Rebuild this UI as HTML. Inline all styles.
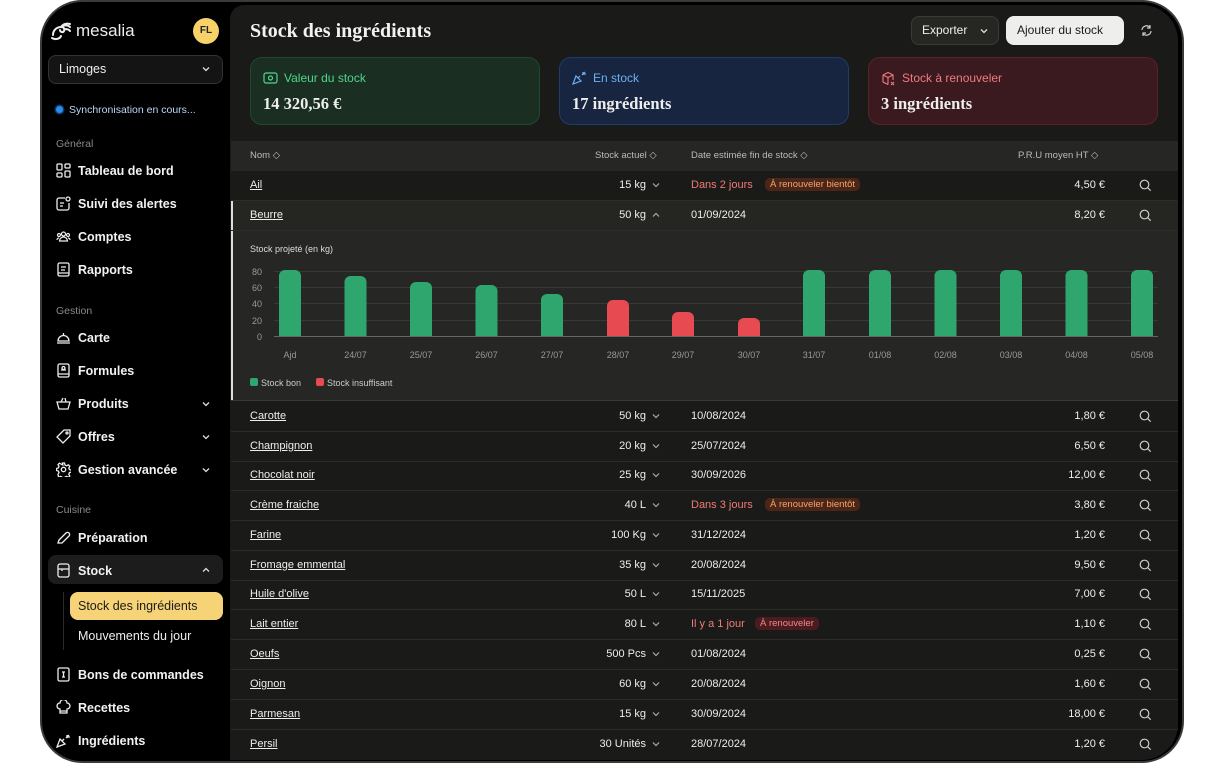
<!DOCTYPE html>
<html><head><meta charset="utf-8"><style>
*{box-sizing:border-box;margin:0;padding:0}
body{width:1224px;height:763px;background:#fff;position:relative;overflow:hidden;font-family:"Liberation Sans",sans-serif;color:#eee}
.abs{position:absolute}
.frame{left:40px;top:0;width:1144px;height:763px;background:#000;border-radius:42px;border:2px solid #3a3a3a}
.main{left:230px;top:5px;width:948px;height:755px;background:#1a1a18;border-radius:14px 36px 36px 0;overflow:hidden}
.nav{position:absolute;left:78px;font-size:12.5px;font-weight:bold;color:#f2f2f2}
.ico{position:absolute;left:56px;width:15px;height:15px}
.sec{position:absolute;left:56px;font-size:10.5px;color:#8a8a8a}
.chev{position:absolute;left:201px;width:10px;height:10px}
.t{position:absolute;font-size:11px;color:#eee;white-space:nowrap}
.name{left:250px;text-decoration:underline}
.red{color:#f07a7a}
.badge{position:absolute;font-size:9.5px;padding:1px 5px;border-radius:5px;background:#4a2518;color:#f3a86a}
.badge2{background:#4a1c20;color:#f08a8a}
.sep{position:absolute;left:231px;width:947px;height:1px;background:#2c2c29}
.card{position:absolute;top:57px;width:290px;height:68px;border-radius:12px}
.card .l{position:absolute;left:33px;top:13px;font-size:12px}
.card .v{position:absolute;left:12px;top:36px;font-family:"Liberation Serif",serif;font-weight:bold;font-size:16.5px;color:#eee}
</style></head><body>
<div class="abs frame"></div>
<svg class="abs" style="left:50px;top:21px" width="24" height="20" viewBox="0 0 24 20"><path d="M3 14c0-5 4-8 8-8 3 0 4 2 3 4s-4 1-4-1M2 17c3 2 8 1 9-2M11 6c2-3 6-4 9-3M13 5c2-1 5-1 7 1M14 8c2 0 5 0 6 2" stroke="#eee" stroke-width="2" fill="none" stroke-linecap="round"/></svg>
<div class="abs" style="left:76px;top:21px;font-size:17px;color:#eee">mesalia</div>
<div class="abs" style="left:193px;top:18px;width:26px;height:26px;border-radius:50%;background:#f6d268;color:#222;font-size:10px;font-weight:bold;text-align:center;line-height:26px">FL</div>
<div class="abs" style="left:48px;top:55px;width:175px;height:29px;border:1px solid #333;border-radius:8px;background:#141414"></div>
<div class="abs" style="left:59px;top:62px;font-size:12.5px">Limoges</div>
<svg class="abs" style="left:201px;top:64px" width="10" height="10"><path d="M2 3.5l3 3 3-3" stroke="#ddd" fill="none" stroke-width="1.3"/></svg>
<div class="abs" style="left:56px;top:106px;width:7px;height:7px;border-radius:50%;background:#2a8cf0;box-shadow:0 0 0 1.5px #0d3d6e"></div>
<div class="abs" style="left:69px;top:104px;font-size:10.5px;color:#b9d7f5">Synchronisation en cours...</div>
<div class="sec" style="top:138px">Général</div>
<svg class="ico" style="top:163px" viewBox="0 0 15 15"><g stroke="#eee" fill="none" stroke-width="1.3"><rect x="1" y="1" width="5" height="6" rx="1"/><rect x="9" y="1" width="5" height="4" rx="1"/><rect x="1" y="10" width="5" height="4" rx="1"/><rect x="9" y="8" width="5" height="6" rx="1"/></g></svg>
<div class="nav" style="top:164px">Tableau de bord</div>
<svg class="ico" style="top:196px" viewBox="0 0 15 15"><g stroke="#eee" fill="none" stroke-width="1.3"><path d="M9 2H3a2 2 0 0 0-2 2v8a2 2 0 0 0 2 2h8a2 2 0 0 0 2-2V7"/><circle cx="12" cy="3" r="2"/><path d="M4 7h4M4 10h3"/></g></svg>
<div class="nav" style="top:197px">Suivi des alertes</div>
<svg class="ico" style="top:229px" viewBox="0 0 15 15"><g stroke="#eee" fill="none" stroke-width="1.2"><circle cx="7.5" cy="5" r="2"/><circle cx="3" cy="6" r="1.5"/><circle cx="12" cy="6" r="1.5"/><path d="M3.5 12a4 4 0 0 1 8 0zM1 11a2 2 0 0 1 2-2M14 11a2 2 0 0 0-2-2"/></g></svg>
<div class="nav" style="top:230px">Comptes</div>
<svg class="ico" style="top:262px" viewBox="0 0 15 15"><g stroke="#eee" fill="none" stroke-width="1.3"><rect x="2" y="1" width="11" height="13" rx="1.5"/><path d="M5 5h5M5 8h4M2 11h11"/></g></svg>
<div class="nav" style="top:263px">Rapports</div>
<div class="sec" style="top:305px">Gestion</div>
<svg class="ico" style="top:330px" viewBox="0 0 15 15"><g stroke="#eee" fill="none" stroke-width="1.3"><path d="M2 11a5.5 5.5 0 0 1 11 0zM1 13h13M7.5 3v2"/></g></svg>
<div class="nav" style="top:331px">Carte</div>
<svg class="ico" style="top:363px" viewBox="0 0 15 15"><g stroke="#eee" fill="none" stroke-width="1.3"><rect x="2" y="1" width="11" height="13" rx="1.5"/><path d="M5 7h5M2 11h11"/><circle cx="7.5" cy="5" r="1.5"/></g></svg>
<div class="nav" style="top:364px">Formules</div>
<svg class="ico" style="top:396px" viewBox="0 0 15 15"><g stroke="#eee" fill="none" stroke-width="1.3"><path d="M1 6h13l-2 7H3zM5 6l2-4M10 6l-1-4"/></g></svg>
<div class="nav" style="top:397px">Produits</div>
<svg class="chev" style="top:399px"><path d="M2 3.5l3 3 3-3" stroke="#ddd" fill="none" stroke-width="1.3"/></svg>
<svg class="ico" style="top:429px" viewBox="0 0 15 15"><g stroke="#eee" fill="none" stroke-width="1.3"><path d="M8 1h6v6l-7 7-6-6z"/><circle cx="11" cy="4" r="1"/></g></svg>
<div class="nav" style="top:430px">Offres</div>
<svg class="chev" style="top:432px"><path d="M2 3.5l3 3 3-3" stroke="#ddd" fill="none" stroke-width="1.3"/></svg>
<svg class="ico" style="top:462px" viewBox="0 0 15 15"><g stroke="#eee" fill="none" stroke-width="1.3"><circle cx="7.5" cy="7.5" r="2.2"/><path d="M6.5 1h2l.5 2 1.6.8 1.8-1 1.4 1.4-1 1.8.7 1.6 2 .5v2l-2 .5-.7 1.6 1 1.8-1.4 1.4-1.8-1-1.6.7-.5 2h-2l-.5-2-1.6-.7-1.8 1L2 12.3l1-1.8L2.3 9 .5 8.5v-2L2.3 6l.7-1.6-1-1.8L3.4 1.2l1.8 1L6.8 3z"/></g></svg>
<div class="nav" style="top:463px">Gestion avancée</div>
<svg class="chev" style="top:465px"><path d="M2 3.5l3 3 3-3" stroke="#ddd" fill="none" stroke-width="1.3"/></svg>
<div class="sec" style="top:504px">Cuisine</div>
<svg class="ico" style="top:530px" viewBox="0 0 15 15"><g stroke="#eee" fill="none" stroke-width="1.3"><path d="M2 13l1-3 7-7a2 2 0 0 1 3 3l-7 7z"/></g></svg>
<div class="nav" style="top:531px">Préparation</div>
<div class="abs" style="left:48px;top:555px;width:175px;height:29px;border-radius:8px;background:#1c1c1c"></div>
<svg class="ico" style="top:563px" viewBox="0 0 15 15"><g stroke="#eee" fill="none" stroke-width="1.3"><rect x="2" y="1" width="11" height="13" rx="2"/><path d="M2 6h11M6 6v2"/></g></svg>
<div class="nav" style="top:564px">Stock</div>
<svg class="chev" style="top:565px"><path d="M2 6.5l3-3 3 3" stroke="#ddd" fill="none" stroke-width="1.3"/></svg>
<div class="abs" style="left:63px;top:592px;width:1px;height:58px;background:#2a2a2a"></div>
<div class="abs" style="left:70px;top:592px;width:153px;height:28px;border-radius:8px;background:#f6d377"></div>
<div class="abs" style="left:78px;top:599px;font-size:12.5px;color:#1a1a1a">Stock des ingrédients</div>
<div class="abs" style="left:78px;top:629px;font-size:12.5px;color:#eee">Mouvements du jour</div>
<svg class="ico" style="top:667px" viewBox="0 0 15 15"><g stroke="#eee" fill="none" stroke-width="1.3"><rect x="2" y="1" width="11" height="13" rx="1.5"/><path d="M6 5h3M7.5 5v5M6 10h3"/></g></svg>
<div class="nav" style="top:668px">Bons de commandes</div>
<svg class="ico" style="top:700px" viewBox="0 0 15 15"><g stroke="#eee" fill="none" stroke-width="1.3"><path d="M4 9a3 3 0 0 1 0-6 3.5 3.5 0 0 1 7 0 3 3 0 0 1 0 6v4H4zM4 11h7"/></g></svg>
<div class="nav" style="top:701px">Recettes</div>
<svg class="ico" style="top:733px" viewBox="0 0 15 15"><g stroke="#eee" fill="none" stroke-width="1.3"><path d="M1 14l3-8 5 5zM6 8l2-2M10 5l3-3M11 2v3M14 4h-3"/></g></svg>
<div class="nav" style="top:734px">Ingrédients</div>

<div class="abs main"></div>
<div class="abs" style="left:250px;top:20px;font-family:'Liberation Serif',serif;font-weight:bold;font-size:20px;color:#f2f2f2">Stock des ingrédients</div>
<div class="abs" style="left:911px;top:16px;width:88px;height:29px;border:1px solid #3a3a36;border-radius:8px;background:#262623"></div>
<div class="abs" style="left:922px;top:23px;font-size:12px">Exporter</div>
<svg class="abs" style="left:979px;top:26px" width="10" height="10"><path d="M2 3.5l3 3 3-3" stroke="#ddd" fill="none" stroke-width="1.3"/></svg>
<div class="abs" style="left:1006px;top:16px;width:118px;height:29px;border-radius:8px;background:#eeeeec"></div>
<div class="abs" style="left:1017px;top:23px;font-size:12px;color:#1a1a1a">Ajouter du stock</div>
<svg class="abs" style="left:1140px;top:24px" width="13" height="13" viewBox="0 0 13 13"><path d="M2 6a4.5 4.5 0 0 1 8-2.5M11 7a4.5 4.5 0 0 1-8 2.5M10 1v3H7M3 12V9h3" stroke="#ccc" fill="none" stroke-width="1.2"/></svg>

<div class="card" style="left:250px;background:#1a2e22;border:1px solid #1f4a30"><svg class="abs" style="left:12px;top:14px" width="15" height="12"><rect x="1" y="1" width="13" height="10" rx="2" stroke="#4fd68a" fill="none" stroke-width="1.2"/><circle cx="7.5" cy="6" r="2" stroke="#4fd68a" fill="none" stroke-width="1.2"/></svg><div class="l" style="color:#4fd68a">Valeur du stock</div><div class="v">14 320,56 €</div></div>
<div class="card" style="left:559px;background:#172540;border:1px solid #1f3d6a"><svg class="abs" style="left:12px;top:13px" width="15" height="14"><path d="M1 13l3-8 5 5zM6 7l2-2M10 4l3-3M11 1v3M14 3h-3" stroke="#6bb0f0" fill="none" stroke-width="1.2"/></svg><div class="l" style="color:#6bb0f0">En stock</div><div class="v">17 ingrédients</div></div>
<div class="card" style="left:868px;background:#3a1a1e;border:1px solid #5a2228"><svg class="abs" style="left:12px;top:13px" width="15" height="15"><path d="M2 4l5-2.5L12 4v5M2 4v7l5 2.5M2 4l5 2.5L12 4M7 6.5v7M10 11l3 3M13 11l-3 3" stroke="#f07a80" fill="none" stroke-width="1.1"/></svg><div class="l" style="color:#f07a80">Stock à renouveler</div><div class="v">3 ingrédients</div></div>

<div class="abs" style="left:231px;top:141px;width:947px;height:30px;background:#262624"></div>
<div class="t" style="left:250px;top:150px;font-size:9.5px;color:#bbb">Nom ◇</div>
<div class="t" style="left:595px;top:150px;font-size:9.5px;color:#bbb">Stock actuel ◇</div>
<div class="t" style="left:691px;top:150px;font-size:9.5px;color:#bbb">Date estimée fin de stock ◇</div>
<div class="t" style="left:1018px;top:150px;font-size:9.5px;color:#bbb">P.R.U moyen HT ◇</div>

<div class="abs" style="left:231px;top:200px;width:947px;height:30px;background:#252522"></div>
<div class="abs" style="left:231px;top:230px;width:947px;height:170px;background:#262625"></div>
<div class="abs" style="left:231px;top:200px;width:2px;height:200px;background:#ddd"></div>
<div class="sep" style="top:200px"></div><div class="sep" style="top:230px"></div><div class="sep" style="top:400px;background:#3a3a36"></div>

<svg class="abs" style="left:0;top:0" width="1224" height="763">
<g stroke="#383834" stroke-width="1"><line x1="274" y1="271.5" x2="1158" y2="271.5"/><line x1="274" y1="287.5" x2="1158" y2="287.5"/><line x1="274" y1="303.5" x2="1158" y2="303.5"/><line x1="274" y1="320.5" x2="1158" y2="320.5"/></g>
<line x1="274" y1="336.5" x2="1158" y2="336.5" stroke="#666" />
<g font-family="Liberation Sans" font-size="9" fill="#999" text-anchor="end"><text x="262" y="275">80</text><text x="262" y="291">60</text><text x="262" y="307">40</text><text x="262" y="324">20</text><text x="262" y="340">0</text></g>
<g fill="#2fa66e">
<path d="M279 336V276a6 6 0 0 1 6-6h10a6 6 0 0 1 6 6V336z"/>
<path d="M344.5 336V282a6 6 0 0 1 6-6h10a6 6 0 0 1 6 6V336z"/>
<path d="M410 336V288a6 6 0 0 1 6-6h10a6 6 0 0 1 6 6V336z"/>
<path d="M475.5 336V291a6 6 0 0 1 6-6h10a6 6 0 0 1 6 6V336z"/>
<path d="M541 336V300a6 6 0 0 1 6-6h10a6 6 0 0 1 6 6V336z"/>
<path d="M803 336V276a6 6 0 0 1 6-6h10a6 6 0 0 1 6 6V336z"/>
<path d="M869 336V276a6 6 0 0 1 6-6h10a6 6 0 0 1 6 6V336z"/>
<path d="M934.5 336V276a6 6 0 0 1 6-6h10a6 6 0 0 1 6 6V336z"/>
<path d="M1000 336V276a6 6 0 0 1 6-6h10a6 6 0 0 1 6 6V336z"/>
<path d="M1065.5 336V276a6 6 0 0 1 6-6h10a6 6 0 0 1 6 6V336z"/>
<path d="M1131 336V276a6 6 0 0 1 6-6h10a6 6 0 0 1 6 6V336z"/>
</g>
<g fill="#e84a52">
<path d="M607 336V306a6 6 0 0 1 6-6h10a6 6 0 0 1 6 6V336z"/>
<path d="M672 336V318a6 6 0 0 1 6-6h10a6 6 0 0 1 6 6V336z"/>
<path d="M738 336V324a6 6 0 0 1 6-6h10a6 6 0 0 1 6 6V336z"/>
</g>
<g font-family="Liberation Sans" font-size="9" fill="#999" text-anchor="middle">
<text x="290" y="358">Ajd</text><text x="355.5" y="358">24/07</text><text x="421" y="358">25/07</text><text x="486.5" y="358">26/07</text><text x="552" y="358">27/07</text><text x="618" y="358">28/07</text><text x="683" y="358">29/07</text><text x="749" y="358">30/07</text><text x="814" y="358">31/07</text><text x="880" y="358">01/08</text><text x="945.5" y="358">02/08</text><text x="1011" y="358">03/08</text><text x="1076.5" y="358">04/08</text><text x="1142" y="358">05/08</text></g>
<rect x="250" y="378" width="8" height="8" rx="2" fill="#2fa66e"/><rect x="316" y="378" width="8" height="8" rx="2" fill="#e84a52"/>
<g font-family="Liberation Sans" font-size="9" fill="#ccc"><text x="261" y="386">Stock bon</text><text x="327" y="386">Stock insuffisant</text><text x="250" y="252" fill="#ddd">Stock projeté (en kg)</text></g>
</svg>

<div id="rows"></div>
<script>
var rows=[
["Ail",185,"15 kg","v",'<span class="red">Dans 2 jours</span>',"a","4,50 €"],
["Beurre",215,"50 kg","^","01/09/2024","","8,20 €"],
["Carotte",416,"50 kg","v","10/08/2024","","1,80 €"],
["Champignon",446,"20 kg","v","25/07/2024","","6,50 €"],
["Chocolat noir",475,"25 kg","v","30/09/2026","","12,00 €"],
["Crème fraiche",505,"40 L","v",'<span class="red">Dans 3 jours</span>',"a","3,80 €"],
["Farine",535,"100 Kg","v","31/12/2024","","1,20 €"],
["Fromage emmental",565,"35 kg","v","20/08/2024","","9,50 €"],
["Huile d'olive",594,"50 L","v","15/11/2025","","7,00 €"],
["Lait entier",624,"80 L","v",'<span class="red">Il y a 1 jour</span>',"b","1,10 €"],
["Oeufs",654,"500 Pcs","v","01/08/2024","","0,25 €"],
["Oignon",684,"60 kg","v","20/08/2024","","1,60 €"],
["Parmesan",714,"15 kg","v","30/09/2024","","18,00 €"],
["Persil",744,"30 Unités","v","28/07/2024","","1,20 €"]];
var h="";
rows.forEach(function(r){var y=r[1]-6;
h+='<div class="t name" style="top:'+y+'px">'+r[0]+'</div>';
h+='<div class="t" style="right:578px;top:'+y+'px">'+r[2]+'</div>';
h+='<svg class="abs" style="left:651px;top:'+(r[1]-5)+'px" width="10" height="10"><path d="'+(r[3]=="^"?"M2 6.5l3-3 3 3":"M2 3.5l3 3 3-3")+'" stroke="#aaa" fill="none" stroke-width="1.2"/></svg>';
h+='<div class="t" style="left:691px;top:'+y+'px">'+r[4]+'</div>';
if(r[5]=="a")h+='<div class="badge" style="left:765px;top:'+(r[1]-7)+'px">À renouveler bientôt</div>';
if(r[5]=="b")h+='<div class="badge badge2" style="left:755px;top:'+(r[1]-7)+'px">À renouveler</div>';
h+='<div class="t" style="right:119px;top:'+y+'px">'+r[6]+'</div>';
h+='<svg class="abs" style="left:1139px;top:'+(r[1]-6)+'px" width="13" height="13"><circle cx="5.5" cy="5.5" r="4.3" stroke="#ccc" fill="none" stroke-width="1.2"/><path d="M8.7 8.7l3 3" stroke="#ccc" stroke-width="1.2"/></svg>';
if(r[1]>400&&r[1]<740)h+='<div class="sep" style="top:'+(r[1]+15)+'px"></div>';
});
document.getElementById("rows").innerHTML=h;
</script>
</body></html>
